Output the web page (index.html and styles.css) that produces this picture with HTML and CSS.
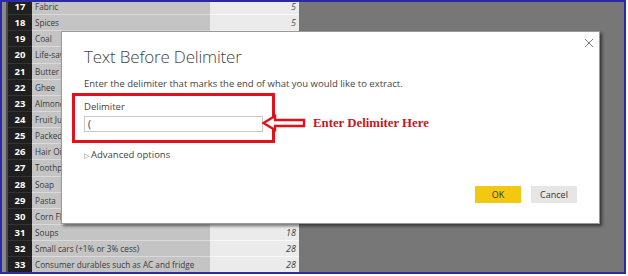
FILE: index.html
```html
<!DOCTYPE html>
<html>
<head>
<meta charset="utf-8">
<title>Text Before Delimiter</title>
<link rel="stylesheet" href="styles.css">
</head>
<body>
<div class="frame">
	<div class="workspace">
		<div class="edge"></div>
		<div class="sheet">
			<div class="row"><span class="num">17</span><span class="name">Fabric</span><span class="val">5</span></div>
			<div class="row"><span class="num">18</span><span class="name">Spices</span><span class="val">5</span></div>
			<div class="row"><span class="num">19</span><span class="name">Coal</span><span class="val"></span></div>
			<div class="row"><span class="num">20</span><span class="name">Life-saving drugs</span><span class="val"></span></div>
			<div class="row"><span class="num">21</span><span class="name">Butter</span><span class="val"></span></div>
			<div class="row"><span class="num">22</span><span class="name">Ghee</span><span class="val"></span></div>
			<div class="row"><span class="num">23</span><span class="name">Almonds</span><span class="val"></span></div>
			<div class="row"><span class="num">24</span><span class="name">Fruit Juice</span><span class="val"></span></div>
			<div class="row"><span class="num">25</span><span class="name">Packed coconut water</span><span class="val"></span></div>
			<div class="row"><span class="num">26</span><span class="name">Hair Oil</span><span class="val"></span></div>
			<div class="row"><span class="num">27</span><span class="name">Toothpaste</span><span class="val"></span></div>
			<div class="row"><span class="num">28</span><span class="name">Soap</span><span class="val"></span></div>
			<div class="row"><span class="num">29</span><span class="name">Pasta</span><span class="val"></span></div>
			<div class="row"><span class="num">30</span><span class="name">Corn Flakes</span><span class="val"></span></div>
			<div class="row"><span class="num">31</span><span class="name">Soups</span><span class="val">18</span></div>
			<div class="row"><span class="num">32</span><span class="name">Small cars (+1% or 3% cess)</span><span class="val">28</span></div>
			<div class="row"><span class="num">33</span><span class="name">Consumer durables such as AC and fridge</span><span class="val">28</span></div>
		</div>
		<div class="backdrop"></div>
	</div>

	<div class="dialog">
		<div class="dlg-top">
			<svg class="close" width="10" height="10" viewBox="0 0 10 10">
				<path d="M1 1 L9 9 M9 1 L1 9" stroke="#7a7a7a" stroke-width="1"/>
			</svg>
		</div>
		<div class="dlg-body">
			<h3>Text Before Delimiter</h3>
			<p class="intro">Enter the delimiter that marks the end of what you would like to extract.</p>
			<div class="highlight">
				<p class="label">Delimiter</p>
				<div class="field">(</div>
			</div>
			<p class="advanced"><span class="tri">&#x25B7;</span>Advanced options</p>
			<div class="buttons">
				<span class="btn ok">OK</span>
				<span class="btn cancel">Cancel</span>
			</div>
		</div>
	</div>

	<div class="callout">
		<svg width="44" height="18" viewBox="0 0 44 18">
			<path d="M1.5 9 L13 2 L13 6 L42 6 L42 12 L13 12 L13 16 Z" fill="#fff" stroke="#e3101b" stroke-width="2.4" stroke-linejoin="miter"/>
		</svg>
		<span class="note">Enter Delimiter Here</span>
	</div>
</div>
</body>
</html>
```

FILE: styles.css
```css
body
{
margin: 0;
background-color: #ffffff;
font-family: "Open Sans", "Noto Sans", sans-serif;
}

.frame
{
position: relative;
width: 626px;
height: 274px;
box-sizing: border-box;
border: 2px solid #2a2aa8;
overflow: hidden;
}

.workspace
{
display: flex;
height: 100%;
background-color: #777777;
}

.edge
{
width: 4px;
background-color: #8a8a8a;
border-right: 2px solid #4c4c4c;
}

.sheet
{
margin-top: -3px;
display: grid;
grid-auto-rows: 16.15px;
align-content: start;
}

.row
{
display: grid;
grid-template-columns: 24px 178px 89px;
font-size: 8.2px;
line-height: 15.15px;
}

.num
{
background-color: #1f1f1f;
color: #ffffff;
font-weight: bold;
font-size: 9.5px;
text-align: center;
border-bottom: 1px solid #333333;
}

.name
{
background-color: #c4c4c4;
color: #3a3a3a;
padding-left: 3px;
white-space: nowrap;
overflow: hidden;
border-bottom: 1px solid #dadada;
}

.val
{
background-color: #ebebeb;
color: #444444;
font-style: italic;
font-size: 9px;
text-align: right;
padding-right: 3px;
border-bottom: 1px solid #f8f8f8;
}

.backdrop
{
flex: 1;
}

/* dialog over the sheet */
.dialog
{
position: absolute;
left: 59px;
top: 29px;
width: 539px;
height: 193px;
box-sizing: border-box;
background-color: #ffffff;
border: 1px solid #9a9a9a;
box-shadow: 2px 2px 3px rgba(0,0,0,0.55);
}

.dlg-top
{
display: flex;
justify-content: flex-end;
padding: 6px 5px 0 0;
height: 7px;
}

.close
{
display: block;
}

.dlg-body
{
padding-left: 22px;
}

h3
{
margin: 0;
font-weight: 300;
font-size: 17px;
letter-spacing: -0.2px;
line-height: 24px;
color: #444444;
}

.intro
{
margin: 8px 0 0 0;
font-size: 9.5px;
line-height: 14px;
color: #444444;
}

.highlight
{
margin: 2px 0 0 -12px;
width: 203px;
height: 50px;
box-sizing: border-box;
border: 3px solid #e3101b;
padding: 4px 0 0 9px;
}

.label
{
margin: 0;
font-size: 9.5px;
line-height: 14px;
color: #444444;
}

.field
{
margin-top: 2px;
width: 179px;
height: 16px;
box-sizing: border-box;
border: 1px solid #c8c8c8;
font-size: 10px;
line-height: 14px;
padding-left: 3px;
color: #333333;
}

.advanced
{
margin: 5px 0 0 0;
font-size: 9.5px;
line-height: 14px;
color: #444444;
}

.tri
{
font-size: 7px;
margin-right: 2px;
color: #666666;
}

.buttons
{
display: flex;
justify-content: flex-end;
gap: 10px;
margin: 23px 22px 0 0;
}

.btn
{
width: 46px;
height: 17px;
font-size: 9px;
line-height: 17px;
text-align: center;
color: #333333;
}

.ok {background-color: #f2c811;}
.cancel {background-color: #e6e6e6;}

/* annotation arrow and note */
.callout
{
position: absolute;
left: 260px;
top: 112px;
display: flex;
align-items: center;
gap: 7px;
}

.note
{
font-family: "Liberation Serif", serif;
font-weight: bold;
font-size: 12.8px;
color: #c8141e;
}
```
